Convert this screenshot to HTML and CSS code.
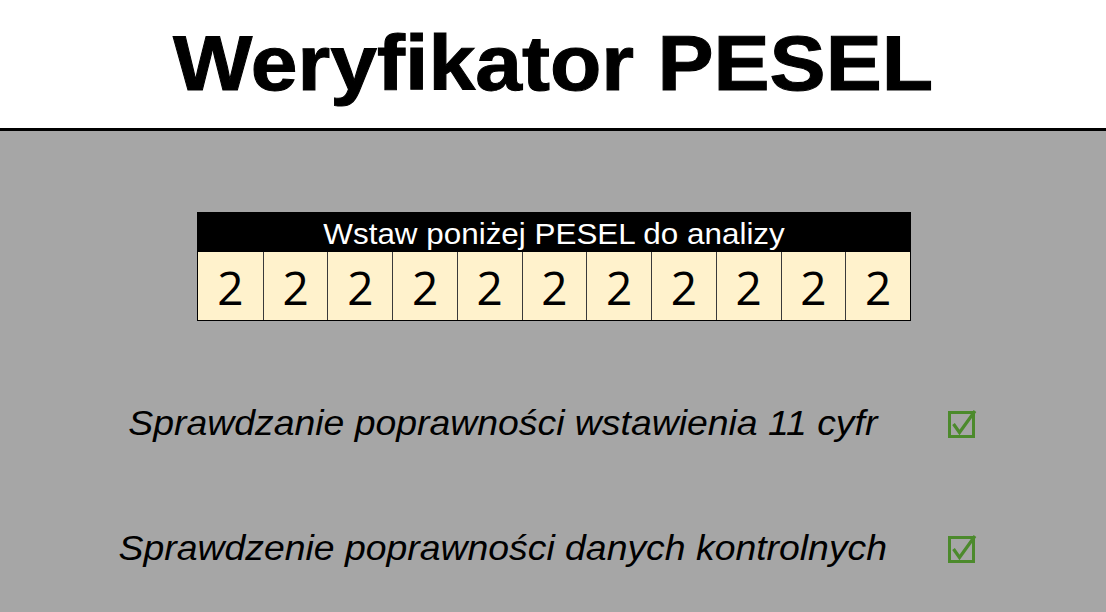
FILE: index.html
```html
<!DOCTYPE html>
<html lang="pl">
<head>
<meta charset="utf-8">
<title>Weryfikator PESEL</title>
<link rel="stylesheet" href="styles.css">
</head>
<body>
<header class="header">
  <h1 class="title">Weryfikator PESEL</h1>
</header>
<main class="main">
  <section class="pesel">
    <div class="pesel-head"><span class="stretch">Wstaw poniżej PESEL do analizy</span></div>
    <div class="pesel-cells">
      <div class="cell">2</div><div class="cell">2</div><div class="cell">2</div><div class="cell">2</div><div class="cell">2</div><div class="cell">2</div><div class="cell">2</div><div class="cell">2</div><div class="cell">2</div><div class="cell">2</div><div class="cell">2</div>
    </div>
  </section>
  <section class="checks">
    <div class="check-row">
      <span class="check-text"><span class="stretch">Sprawdzanie poprawności wstawienia 11 cyfr</span></span>
      <svg class="check-icon" viewBox="0 0 30 30" width="30" height="30" aria-hidden="true">
        <rect x="2.5" y="4.5" width="24" height="24" fill="none" stroke="#4c8a2c" stroke-width="3"/>
        <path d="M6.5 16 L12.5 24.5 L28 3" fill="none" stroke="#4c8a2c" stroke-width="3.2" stroke-linejoin="miter"/>
      </svg>
    </div>
    <div class="check-row">
      <span class="check-text"><span class="stretch">Sprawdzenie poprawności danych kontrolnych</span></span>
      <svg class="check-icon" viewBox="0 0 30 30" width="30" height="30" aria-hidden="true">
        <rect x="2.5" y="4.5" width="24" height="24" fill="none" stroke="#4c8a2c" stroke-width="3"/>
        <path d="M6.5 16 L12.5 24.5 L28 3" fill="none" stroke="#4c8a2c" stroke-width="3.2" stroke-linejoin="miter"/>
      </svg>
    </div>
  </section>
</main>
</body>
</html>
```

FILE: styles.css
```css
html, body {
  margin: 0;
  padding: 0;
}
body {
  background: #a6a6a6;
  font-family: "Liberation Sans", Arial, sans-serif;
  min-height: 612px;
}
.stretch {
  display: inline-block;
  transform: scaleX(1.083);
}
.header {
  background: #ffffff;
  height: 128px;
  border-bottom: 3px solid #000;
  display: flex;
  align-items: center;
  justify-content: center;
}
.title {
  margin: 0;
  font-family: "Liberation Sans", Arial, sans-serif;
  font-weight: 700;
  font-size: 77px;
  line-height: 1;
  color: #000;
  -webkit-text-stroke: 1px #000;
  transform: scaleX(1.092);
  margin-top: -2px;
}
.main {
  padding-top: 81px;
}
.pesel {
  width: 714px;
  margin-left: calc(50% - 356px);
  border: 1px solid #000;
  box-sizing: border-box;
}
.pesel-head {
  background: #000;
  color: #fff;
  height: 39px;
  font-size: 29px;
  line-height: 42px;
  text-align: center;
}
.pesel-cells {
  display: grid;
  grid-template-columns: repeat(11, 1fr);
  background: #fff2cc;
}
.cell {
  height: 68px;
  border-left: 1px solid #3a3a3a;
  display: flex;
  align-items: center;
  justify-content: center;
  font-family: "Open Sans", "Liberation Sans", sans-serif;
  font-size: 46px;
  color: #000;
  padding-top: 2px;
  box-sizing: border-box;
}
.cell:first-child {
  border-left: none;
}
.checks {
  padding-top: 82px;
  padding-left: 100px;
  display: flex;
  flex-direction: column;
  gap: 85px;
}
.check-row {
  display: grid;
  grid-template-columns: 806px 30px;
  column-gap: 41px;
  align-items: center;
  height: 40px;
}
.check-text {
  font-style: italic;
  font-size: 34.5px;
  text-align: center;
  color: #000;
  white-space: nowrap;
}
.check-icon {
  display: block;
}
```
